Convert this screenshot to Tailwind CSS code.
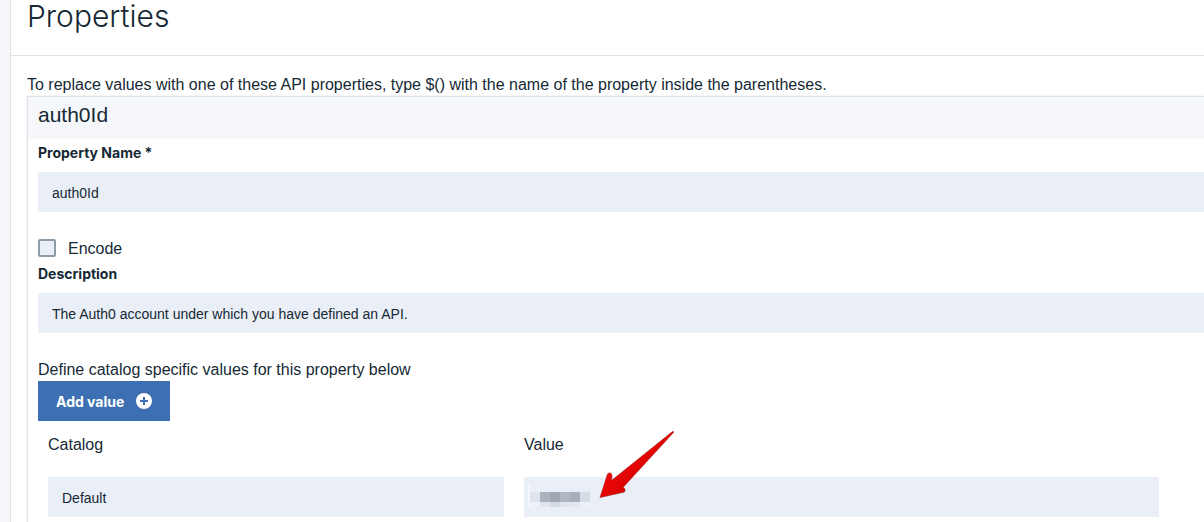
<!DOCTYPE html>
<html lang="en">
<head>
<meta charset="utf-8">
<title>Properties</title>
<script src="https://cdn.jsdelivr.net/npm/@tailwindcss/browser@4"></script>
</head>
<body class="bg-[#f5f7fb] pl-2.5 font-['Liberation_Sans',Arial,sans-serif] text-base text-[#152935]">
<main class="relative min-h-screen overflow-hidden border-l border-[#dfe3e6] bg-white">
  <header class="border-b border-[#dfe3e6] pb-[22px] pl-4">
    <h1 class="font-['Inter',sans-serif] text-[30px]/[33px] font-light">Properties</h1>
  </header>
  <section class="pt-[18px] pl-4">
    <p class="leading-[22px]">To replace values with one of these API properties, type $() with the name of the property inside the parentheses.</p>
    <form class="border-t border-l border-[#dfe3e6] shadow-[0_0_2px_#0000001a]">
      <h2 class="bg-[#f5f7fb] pt-1 pb-2.5 pl-2.5 text-[21px]/7">auth0Id</h2>
      <div class="pl-2.5">
        <label for="name" class="block pt-1 pb-2.5 font-['Inter',sans-serif] text-[14px]/[19px] font-bold">Property Name *</label>
        <input id="name" type="text" value="auth0Id" class="block h-10 w-full bg-[#eaeef7] px-3.5 pt-0.5 text-sm">
        <div class="mt-6 flex h-6 items-center gap-3">
          <input id="encode" type="checkbox" class="size-[18px] appearance-none rounded-xs border-2 border-[#8c9ba5] bg-[#eaeef7] checked:bg-[#3d70b2]">
          <label for="encode" class="pt-0.5 leading-6">Encode</label>
        </div>
        <label for="description" class="block pt-1 pb-2.5 font-['Inter',sans-serif] text-[14px]/[19px] font-bold">Description</label>
        <input id="description" type="text" value="The Auth0 account under which you have defined an API." class="block h-10 w-full bg-[#eaeef7] px-3.5 pt-0.5 text-sm">
        <p class="pt-[26px] leading-[22px]">Define catalog specific values for this property below</p>
        <button type="button" class="flex h-10 w-[132px] items-center gap-3 bg-[#3d70b2] pl-[18px] font-['Inter',sans-serif] text-[14px] font-bold text-white">
          Add value
          <svg class="size-4" viewBox="0 0 16 16" aria-hidden="true"><circle cx="8" cy="8" r="8" fill="#fff"/><path d="M8 4v8M4 8h8" stroke="#3d70b2" stroke-width="2"/></svg>
        </button>
        <div class="grid grid-cols-[456fr_635fr] gap-x-5 pt-2.5 pr-[45px] pb-2.5 pl-2.5">
          <div>
            <label for="catalog" class="block pt-0.5 pb-5 leading-6">Catalog</label>
            <input id="catalog" type="text" value="Default" class="block h-10 w-full bg-[#eaeef7] px-3.5 pt-0.5 text-sm">
          </div>
          <div class="relative">
            <label for="value" class="block pt-0.5 pb-5 leading-6">Value</label>
            <input id="value" type="text" class="block h-10 w-full bg-[#eaeef7] px-3.5 pt-0.5 text-sm">
            <svg class="pointer-events-none absolute top-0 left-0 h-[92px] w-40" viewBox="0 0 160 92" aria-hidden="true">
              <g shape-rendering="crispEdges">
                <path d="M4 52h2v24H4z" fill="#f5f7fb"/>
                <path d="M6 61h10v10H6z" fill="#e0e5ed"/>
                <path d="M16 61h10v10H16z" fill="#abb3be"/>
                <path d="M26 61h10v10H26z" fill="#9fa8b3"/>
                <path d="M36 61h10v10H36z" fill="#b1b8c3"/>
                <path d="M46 61h10v10H46z" fill="#a8b0bc"/>
                <path d="M56 61h10v10H56z" fill="#d6dce6"/>
                <path d="M16 71h10v5H16zM36 71h10v5H36z" fill="#e0e5ed"/>
                <path d="M26 71h10v5H26z" fill="#d6dce6"/>
                <path d="M46 71h10v5H46z" fill="#e3e8f0"/>
                <path d="M6 71h10v5H6zM56 71h10v5H56z" fill="#edf1f8"/>
              </g>
              <defs><linearGradient id="red" x1="0" y1="0" x2="1" y2="1"><stop offset="0.3" stop-color="#f80808"/><stop offset="0.75" stop-color="#cc0000"/></linearGradient></defs>
              <path d="M76 66.500L83.500 43Q84.500 41.500 86.500 42Q88.300 42.800 88 45L87.500 49.500L148.500 0.500Q149.800 0 149.500 1.500L98.500 57L99 57L99.500 56.500Q101.500 57.500 101 60Q100.500 61.500 98.500 61.500Z" fill="url(#red)" stroke="#8d1010" stroke-width="0.500"/>
            </svg>
          </div>
        </div>
      </div>
    </form>
  </section>
  <svg class="absolute right-3 bottom-0 h-[5px] w-[7px]" viewBox="0 0 7 5" aria-hidden="true"><path d="M1 0.500L6 5H1z" fill="#111" stroke="#aaa" stroke-width="0.500"/></svg>
</main>
</body>
</html>
